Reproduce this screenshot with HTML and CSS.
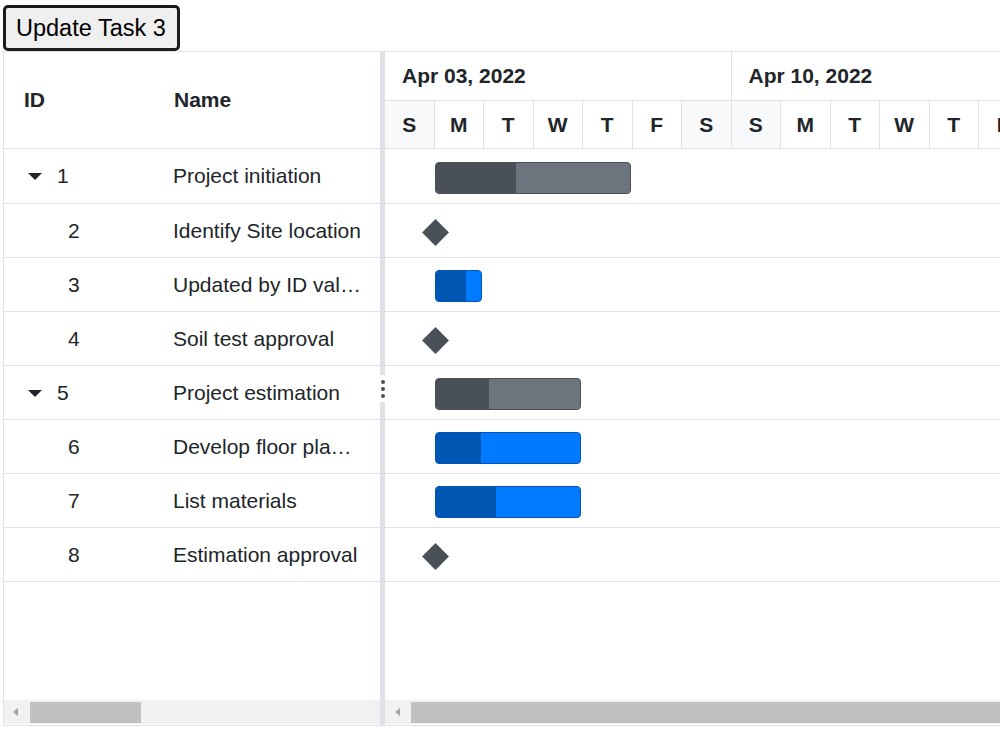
FILE: index.html
```html
<!DOCTYPE html>
<html>
<head>
<meta charset="utf-8">
<link rel="stylesheet" href="styles.css">
</head>
<body>
<div class="page">
  <button class="btn">Update Task 3</button>
  <div class="gantt">
    <div class="grid-pane">
      <div class="grid-header">
        <div class="col-id">ID</div>
        <div class="col-name">Name</div>
      </div>
      <div class="grid-body">
        <div class="grow"><div class="cell-id parent"><span class="caret"></span><span>1</span></div><div class="cell-name">Project initiation</div></div>
        <div class="grow"><div class="cell-id child">2</div><div class="cell-name">Identify Site location</div></div>
        <div class="grow"><div class="cell-id child">3</div><div class="cell-name">Updated by ID value</div></div>
        <div class="grow"><div class="cell-id child">4</div><div class="cell-name">Soil test approval</div></div>
        <div class="grow"><div class="cell-id parent"><span class="caret"></span><span>5</span></div><div class="cell-name">Project estimation</div></div>
        <div class="grow"><div class="cell-id child">6</div><div class="cell-name">Develop floor plan for estimation</div></div>
        <div class="grow"><div class="cell-id child">7</div><div class="cell-name">List materials</div></div>
        <div class="grow"><div class="cell-id child">8</div><div class="cell-name">Estimation approval</div></div>
      </div>
      <div class="hscroll grid-scroll"><span class="arrow"></span><span class="thumb"></span></div>
    </div>
    <div class="splitter">
      <div class="split-fill"></div>
      <div class="dots"><i></i><i></i><i></i></div>
      <div class="split-fill"></div>
    </div>
    <div class="chart-pane">
      <div class="timeline">
        <div class="tier-top">
          <div class="week">Apr 03, 2022</div>
          <div class="week">Apr 10, 2022</div>
        </div>
        <div class="tier-bottom">
          <div class="day wkend">S</div><div class="day">M</div><div class="day">T</div><div class="day">W</div><div class="day">T</div><div class="day">F</div><div class="day wkend">S</div>
          <div class="day wkend">S</div><div class="day">M</div><div class="day">T</div><div class="day">W</div><div class="day">T</div><div class="day">F</div><div class="day wkend">S</div>
        </div>
      </div>
      <div class="chart-body">
        <div class="crow"><div class="bar parent-bar" style="width:196px"><div class="prog" style="width:80px"></div></div></div>
        <div class="crow"><div class="milestone"></div></div>
        <div class="crow"><div class="bar child-bar" style="width:47px"><div class="prog" style="width:30px"></div></div></div>
        <div class="crow"><div class="milestone"></div></div>
        <div class="crow"><div class="bar parent-bar" style="width:146px"><div class="prog" style="width:53px"></div></div></div>
        <div class="crow"><div class="bar child-bar" style="width:146px"><div class="prog" style="width:45px"></div></div></div>
        <div class="crow"><div class="bar child-bar" style="width:146px"><div class="prog" style="width:60px"></div></div></div>
        <div class="crow"><div class="milestone"></div></div>
      </div>
      <div class="hscroll chart-scroll"><span class="arrow"></span><span class="thumb"></span></div>
    </div>
  </div>
</div>
</body>
</html>
```

FILE: styles.css
```css
html, body {
  margin: 0;
  padding: 0;
  overflow: hidden;
  background: #fff;
}
body {
  font-family: "Liberation Sans", Arial, sans-serif;
  color: #212529;
}
.page {
  padding: 5px 0 0 3px;
  width: 1300px;
}
.btn {
  display: block;
  box-sizing: border-box;
  width: 177px;
  height: 46px;
  margin: 0;
  padding: 0 0 0 10px;
  text-align: left;
  border: 3px solid #1b1b1b;
  border-radius: 5px;
  background: #efefef;
  font-family: "Liberation Sans", Arial, sans-serif;
  font-size: 23.5px;
  color: #000;
  line-height: 40px;
}
.gantt {
  display: flex;
  width: 1250px;
  height: 673px;
  border: 1px solid #dee2e6;
  border-right: none;
}
.grid-pane {
  flex: none;
  width: 376px;
  display: flex;
  flex-direction: column;
}
.grid-header {
  height: 96px;
  border-bottom: 1px solid #dee2e6;
  display: flex;
  align-items: center;
  font-size: 21px;
  font-weight: bold;
}
.col-id {
  width: 130px;
  padding-left: 20px;
}
.col-name {
  padding-left: 20px;
}
.grid-body {
  flex: 1;
}
.grow {
  display: flex;
  align-items: center;
  height: 53px;
  border-bottom: 1px solid #dee2e6;
  font-size: 21px;
}
.grow:first-child,
.crow:first-child {
  height: 54px;
}
.cell-id {
  width: 150px;
  box-sizing: border-box;
  display: flex;
  align-items: center;
}
.cell-id.parent {
  padding-left: 24px;
}
.cell-id.child {
  padding-left: 64px;
}
.caret {
  width: 0;
  height: 0;
  border-left: 7.5px solid transparent;
  border-right: 7.5px solid transparent;
  border-top: 7px solid #212529;
  margin-right: 15px;
  margin-top: 1px;
}
.cell-name {
  width: 226px;
  box-sizing: border-box;
  padding: 0 18px 0 19px;
  white-space: nowrap;
  overflow: hidden;
  text-overflow: ellipsis;
}
.hscroll {
  height: 24px;
  margin-bottom: 1px;
  background: #f1f1f1;
  display: flex;
  align-items: center;
}
.hscroll .arrow {
  width: 0;
  height: 0;
  border-top: 4px solid transparent;
  border-bottom: 4px solid transparent;
  border-right: 5px solid #a3a3a3;
}
.hscroll .thumb {
  height: 21px;
  background: #c1c1c1;
  margin-top: 1px;
}
.grid-scroll {
  padding-left: 9px;
}
.grid-scroll .thumb {
  width: 111px;
  margin-left: 12px;
}
.chart-scroll {
  padding-left: 10px;
}
.chart-scroll .thumb {
  flex: 1;
  margin-left: 11px;
}
.splitter {
  flex: none;
  width: 5px;
  display: flex;
  flex-direction: column;
}
.split-fill {
  flex: 1;
  background: #dee2e6;
}
.dots {
  height: 27px;
  display: flex;
  flex-direction: column;
  align-items: center;
  justify-content: center;
  gap: 3px;
  background: #fff;
}
.dots i {
  display: block;
  width: 4px;
  height: 4px;
  border-radius: 50%;
  background: #495057;
}
.chart-pane {
  flex: 1;
  min-width: 0;
  display: flex;
  flex-direction: column;
}
.timeline {
  height: 96px;
  border-bottom: 1px solid #dee2e6;
  display: flex;
  flex-direction: column;
}
.tier-top {
  height: 48px;
  border-bottom: 1px solid #dee2e6;
  display: flex;
}
.week {
  width: 346.5px;
  flex: none;
  box-sizing: border-box;
  border-right: 1px solid #dee2e6;
  padding-left: 17px;
  font-size: 21px;
  font-weight: bold;
  display: flex;
  align-items: center;
}
.tier-bottom {
  flex: 1;
  display: flex;
}
.day {
  width: 49.5px;
  flex: none;
  box-sizing: border-box;
  border-right: 1px solid #dee2e6;
  display: flex;
  align-items: center;
  justify-content: center;
  font-size: 21px;
  font-weight: bold;
}
.day.wkend {
  background: #f8f9fa;
}
.chart-body {
  flex: 1;
}
.crow {
  height: 53px;
  border-bottom: 1px solid #dee2e6;
  display: flex;
  align-items: center;
}
.bar {
  box-sizing: border-box;
  height: 32px;
  margin-left: 50px;
  margin-top: 3px;
  border-radius: 4px;
  overflow: hidden;
  display: flex;
}
.bar .prog {
  height: 100%;
}
.parent-bar {
  background: #6c757d;
  border: 1px solid #495057;
}
.parent-bar .prog {
  background: #495057;
}
.child-bar {
  background: #007bff;
  border: 1px solid #0056b3;
}
.child-bar .prog {
  background: #0056b3;
}
.milestone {
  width: 19px;
  height: 19px;
  margin-left: 40.5px;
  margin-top: 3px;
  background: #495057;
  transform: rotate(45deg);
}
```
